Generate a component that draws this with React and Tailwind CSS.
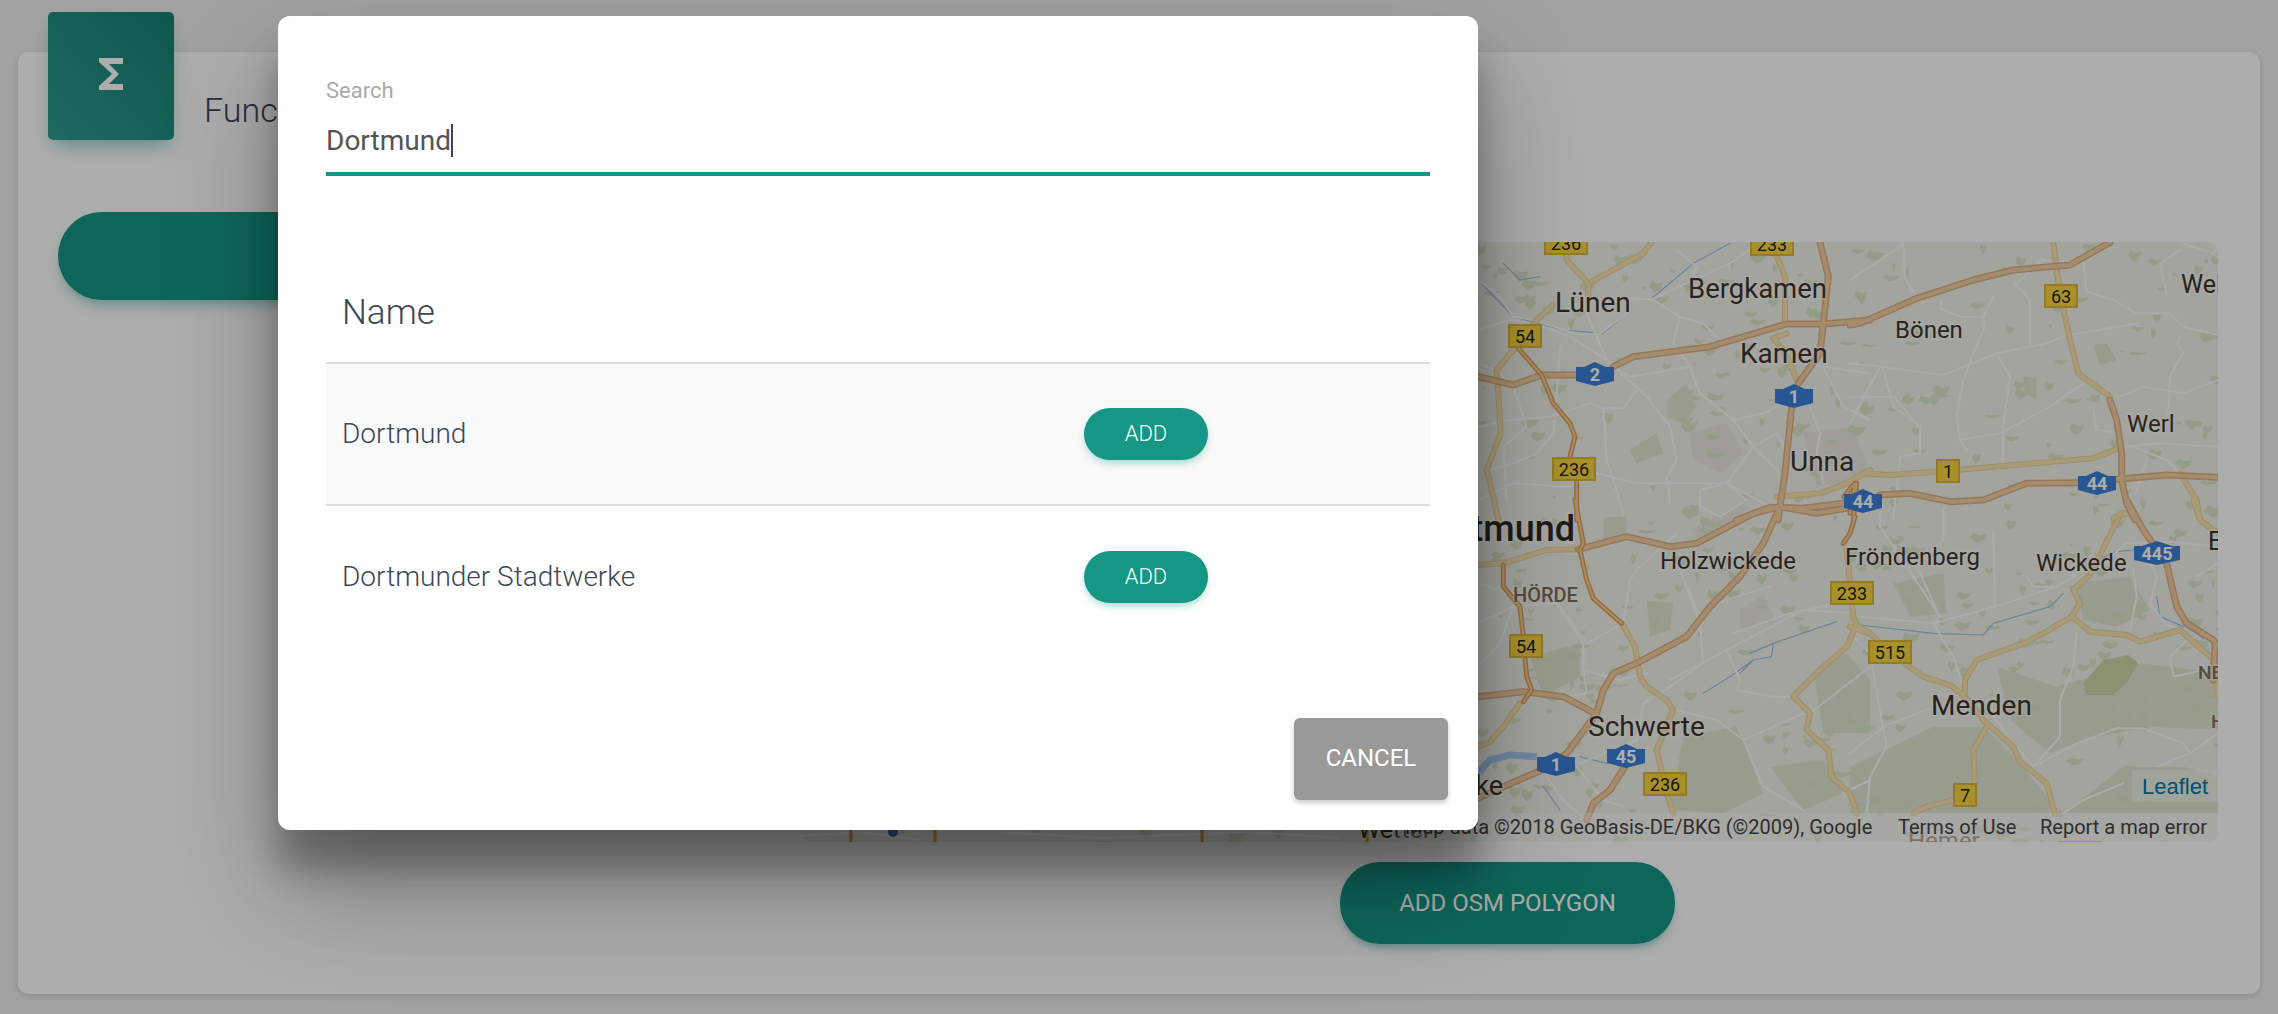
const ROADS = [
  // north west part of the map
  { ox: 1470, oy: 220, white: [
    "24,180 90,230 130,290 190,300 330,345 390,340 470,280 480,235 550,240 630,290 700,310 750,360",
    "24,330 120,300 190,310 300,350 410,420 530,530 600,620 620,720 590,770 600,850",
    "350,280 410,420 430,440 480,470 660,440 690,520 790,600 850,680 930,760",
    "24,430 80,450 130,500 170,620 100,680 110,840",
    "270,380 260,530 250,640 200,700 130,730 24,760",
    "24,620 120,600 240,590 360,550 400,565 460,565 500,510",
    "400,565 410,720 430,780 460,880",
    "380,760 500,790 640,790 770,790 900,860",
    "630,290 610,370 660,440 680,500",
    "770,790 850,680 920,640 950,690",
    "790,600 880,580 960,540",
    "1020,560 1050,640 1040,700 1060,790",
    "1060,440 1200,460", "1000,430 1060,440 1120,560 1200,600",
    "540,240 780,130 880,60", "620,90 680,140 660,190",
    "24,840 130,790 300,800 380,760",
    "690,810 770,790 830,840 750,890 690,860 690,810",
  ], yellow: [
    "355,190 290,120 285,70", "355,190 520,100 545,67", "355,190 355,225",
    "250,255 200,300 165,347 80,450 85,520 92,640 50,750 70,830 85,900",
    "905,72 945,170 945,300", "950,340 910,355 935,385 960,430 985,490",
    "920,830 1050,820 1130,790 1200,750",
  ], orange: [
    "24,470 130,495 215,465 320,465", "430,440 490,410 720,380 950,312 1060,312 1200,300",
    "1050,67 1075,170 1060,310 1050,400 985,490", "965,560 945,760 930,860 925,900",
    "800,900 900,862 1000,865 1120,850",
  ], thin: [
    "145,385 215,465 250,550 300,610 315,650 300,710", "320,780 320,900",
    "1122,830 1145,800 1160,790 1150,900",
  ], water: [
    "24,180 130,290 280,330 400,340 470,280", "540,240 670,130 780,70",
    "100,130 150,180 210,170",
  ] },
  // north east part of the map
  { ox: 1850, oy: 220, white: [
    "0,180 100,115 160,70 165,175 200,230 220,250", "275,240 270,265 330,290 400,290 405,320 370,400 340,480 320,590 330,660 350,690",
    "0,430 90,440 280,465 440,400 590,370 650,345", "660,345 865,310", "430,230 400,290",
    "90,440 0,610", "495,190 540,240 540,370", "700,130 710,215 790,240 860,280 960,280 1000,320 1104,345",
    "990,350 980,370 1000,395 960,470 955,580", "810,530 880,500 1000,520 1104,480",
    "830,680 930,670 1104,680", "850,680 950,720 1000,770", "890,720 860,810",
    "100,450 130,560 210,620 210,700 150,710 130,900", "0,530 130,530 200,610", "330,660 450,640 600,560 700,490",
    "1000,70 1090,100 1104,80", "700,130 580,120 500,190", "440,400 480,470 460,620 460,730",
    "730,570 740,630 810,640", "990,90 930,130 950,220",
  ], yellow: [
    "610,67 620,150 632,227 660,360 685,460 780,530",
    "0,790 40,760 120,765 293,752 730,715 805,685",
    "990,760 1040,840 1050,900", "790,895 815,880 855,880",
  ], orange: [
    "0,315 30,310 200,235 370,180 490,150 660,135 780,67",
    "780,540 800,600 815,700 815,780 830,850 855,900",
    "90,825 180,820 300,845 400,840 530,790 690,788", "800,778 950,765 1104,772",
  ], thin: ["0,880 15,790"], water: [] },
  // south west part of the map
  { ox: 1470, oy: 500, white: [
    "24,370 130,320 260,310 340,430 340,510 450,540 530,520",
    "270,320 350,430 460,370 480,240 500,210 620,100",
    "24,500 90,430 130,320", "340,510 350,580 290,590",
    "630,210 690,370 700,490 600,560 520,610 500,720 330,790",
    "600,540 770,450 810,540 800,570 910,590 970,590",
    "620,630 740,660 820,720 880,860 1000,930",
    "770,450 1000,330 1150,340", "790,400 960,340 1100,310",
    "320,800 400,900 460,920", "230,830 280,900 330,945",
    "900,260 800,290 720,320", "640,240 700,370", "1020,640 1200,500",
    "1120,880 1200,840", "820,720 1000,640",
    "30,250 110,280 150,310",
  ], yellow: [
    "24,195 100,190 230,150 325,148",
    "455,370 495,440 510,530 530,560 590,600 610,630 560,750 590,880 610,940",
    "150,610 100,680 60,725 24,740",
    "1130,150 1150,350 1160,375 1130,440 1050,510 970,590 1020,640 1010,690 1075,750 1085,830 1140,880 1160,940",
    "1160,375 1200,400",
  ], orange: [
    "325,148 470,110 600,140 680,130 850,40 930,20 1040,40 1130,25",
    "930,20 880,130 810,230 720,320 650,410 500,490 430,520 400,570 380,640 290,760 215,810 100,860 24,895",
    "24,590 160,575 280,590 375,640", "465,800 420,870 370,910 350,960",
  ], thin: [
    "315,0 340,130 330,150 350,240 370,295 455,370",
    "100,195 100,260 150,320 160,410 170,530 185,570 160,605",
    "1155,50 1140,100 1120,130",
  ], water: [
    "840,460 910,430 1100,365", "700,580 780,530 850,480", "910,430 905,470 850,480 810,520",
    "330,770 410,790", "220,860 270,930",
  ] },
  // south east part of the map
  { ox: 1850, oy: 500, white: [
    "0,760 100,680 240,625", "550,800 680,730 800,685 880,685 1000,730 1020,760 1104,700",
    "550,800 490,730 430,650", "820,850 700,900 640,940", "720,225 830,130 960,125 1104,140",
    "90,40 90,80 270,350 250,370 310,470 345,570", "430,100 435,320 250,370 30,350",
    "280,20 280,120 200,200 270,350", "435,320 620,260 680,225 660,225",
    "900,190 920,230 900,310 950,375 1000,390", "850,210 860,290 840,390",
    "680,400 670,500 630,600 630,710 550,800", "1010,420 960,470 970,530 1060,510",
    "100,680 110,740 60,830 50,940", "0,400 60,460 100,690", "920,800 1020,760",
    "530,230 550,260 620,260", "1040,230 1104,190",
  ], yellow: [
    "0,380 60,400 120,460 220,530 300,555 345,590", "345,590 345,540 380,480 520,430 580,400 665,350 690,310 670,270 720,225 810,45 835,40",
    "665,350 720,395 830,405 870,425 990,390 1080,470",
    "345,590 400,660 490,740 510,785 590,850 615,940", "410,680 370,750 375,850",
    "310,900 230,920 190,940", "1030,0 1050,60 1104,100", "1090,480 1104,590",
  ], orange: [
    "830,0 880,90 950,190 980,320 1010,370 1090,420 1104,440",
    "1095,430 1090,540",
  ], thin: [], water: [
    "30,375 250,400 400,405 430,370 600,320 640,280", "850,150 800,155 740,180",
    "920,290 930,350 1000,380", "1010,380 1060,415",
  ] },
]

const FORESTS = [
  { ox: 1850, oy: 500, pts: "440,500 620,560 870,490 1104,520 1104,690 900,680 700,720 600,760 480,660" },
  { ox: 1850, oy: 500, pts: "0,800 250,680 400,680 500,780 600,900 600,940 0,940" },
  { ox: 1850, oy: 500, pts: "640,940 820,800 1000,800 1104,830 1104,940" },
  { ox: 1850, oy: 500, pts: "680,250 840,230 900,330 800,380 700,360" },
  { ox: 1850, oy: 500, pts: "130,250 280,220 290,340 180,350" },
  { ox: 1850, oy: 220, pts: "520,470 560,475 560,540 525,520" },
  { ox: 1850, oy: 220, pts: "730,375 770,370 800,420 750,435" },
  { ox: 1470, oy: 220, pts: "590,540 650,490 680,560 640,610 590,590" },
  { ox: 1470, oy: 220, pts: "480,690 560,640 580,700 500,730" },
  { ox: 1470, oy: 500, pts: "530,300 610,310 600,390 540,410" },
  { ox: 1470, oy: 500, pts: "640,710 800,680 880,880 760,940 600,930" },
  { ox: 1470, oy: 500, pts: "900,800 1060,780 1120,880 1000,930" },
  { ox: 1470, oy: 500, pts: "1030,510 1130,460 1200,540 1200,700 1060,700" },
  { ox: 1470, oy: 500, pts: "180,470 330,430 330,530 220,590" },
  { ox: 1470, oy: 500, pts: "400,50 470,50 470,100 400,120" },
]

const CITY = [
  { ox: 1470, oy: 500, pts: "810,330 880,285 920,370 810,385" },
  { ox: 1470, oy: 220, pts: "660,640 770,610 820,700 750,760 670,720" },
  { ox: 1470, oy: 220, pts: "1000,640 1150,620 1200,770 1040,800" },
  { ox: 1470, oy: 500, pts: "660,90 830,0 820,40 700,130" },
]

const SHIELDS = [
  ["2", 1595, 374], ["1", 1794, 396], ["44", 1863, 501], ["44", 2097, 483],
  ["445", 2157, 553], ["1", 1556, 764], ["45", 1626, 756],
]

const SIGNS = [
  ["236", 1566, 243], ["233", 1772, 244], ["54", 1525, 336], ["236", 1574, 469],
  ["63", 2061, 296], ["1", 1948, 471], ["54", 1526, 646], ["233", 1852, 593],
  ["236", 1665, 784], ["515", 1890, 652], ["7", 1965, 795], ["515", 2080, 853],
]

// text, x, baseline, size, weight, colour, anchor
const PLACES = [
  ["Lünen", 1555, 312, 28], ["Bergkamen", 1688, 298, 27.5], ["Kamen", 1740, 363, 28],
  ["Unna", 1790, 471, 28], ["Bönen", 1895, 338, 24], ["Wel", 2181, 293, 25],
  ["Werl", 2127, 432, 24], ["Dortmund", 1575, 541, 36, 500, "#2c2820", "end"],
  ["Holzwickede", 1660, 569, 24], ["HÖRDE", 1513, 602, 20, 500, "#7c6e5c"],
  ["Schwerte", 1588, 736, 28], ["Herdecke", 1503, 795, 27, 400, "#3c362c", "end"],
  ["Fröndenberg", 1845, 565, 24], ["Wickede", 2036, 571, 24], ["Menden", 1931, 715, 28],
  ["Ense", 2208, 550, 25], ["NEHEIM", 2198, 679, 19, 500, "#7c6e5c"], ["Hüsten", 2211, 728, 19, 500, "#7c6e5c"],
  ["Hemer", 1908, 849, 24, 400, "#7c6e5c"], ["Wetter", 1358, 838, 25],
]

const rnd = (() => {
  let s = 41
  return () => {
    s = (s * 16807) % 2147483647
    return s / 2147483647
  }
})()

// little scraps of woodland, the texture of the map
const SCRAPS = Array.from({ length: 800 }, () => {
  const x = 800 + rnd() * 1418
  const y = 242 + rnd() * 600
  const w = 3 + rnd() * 13
  const h = 3 + rnd() * 10
  return `${x},${y} ${x + w * 0.5},${y + h * 0.25} ${x + w},${y + h * 0.1} ${x + w * 0.8},${y + h * 0.7} ${x + w * 0.3},${y + h} ${x - w * 0.2},${y + h * 0.5}`
})

const toPage = (ox, oy, str) =>
  str
    .split(" ")
    .map((p) => {
      const [x, y] = p.split(",").map(Number)
      return `${ox + x / 3},${oy + y / 3}`
    })
    .join(" ")

const Lines = ({ kind, color, width }) =>
  ROADS.flatMap((layer, i) =>
    layer[kind].map((str, j) => (
      <polyline
        key={`${kind}-${color}-${i}-${j}`}
        points={toPage(layer.ox, layer.oy, str)}
        fill="none"
        stroke={color}
        strokeWidth={width}
        strokeLinejoin="round"
        strokeLinecap="round"
      />
    ))
  )

const MapDrawing = () => (
  <svg viewBox="800 242 1418 600" className="block w-full h-full">
    <rect x="800" y="242" width="1418" height="600" fill="#f2f2ea" />
    {FORESTS.map((f, i) => (
      <polygon key={i} points={toPage(f.ox, f.oy, f.pts)} fill="#dfe6d2" />
    ))}
    <polygon points={toPage(1850, 500, "700,550 760,480 835,465 865,490 830,550 790,585 710,585")} fill="#cbd9a8" />
    {CITY.map((f, i) => (
      <polygon key={i} points={toPage(f.ox, f.oy, f.pts)} fill="#e9e7e0" />
    ))}
    {SCRAPS.map((p, i) => (
      <polygon key={i} points={p} fill="#dbe5cb" />
    ))}
    <Lines kind="water" color="#9cc0ec" width={1.2} />
    <polyline points={toPage(1470, 500, "24,820 60,780 120,765 200,770")} fill="none" stroke="#a8c8f0" strokeWidth="7" />
    <polyline points="800,836 860,832 920,840" fill="none" stroke="#fff" strokeWidth="2" />
    <polyline points="1000,832 1100,838 1250,832 1340,838" fill="none" stroke="#fff" strokeWidth="2" />
    <Lines kind="white" color="#fcfcfa" width={2} />
    <Lines kind="yellow" color="#e8d09a" width={6} />
    <Lines kind="yellow" color="#f8e4b0" width={4} />
    <Lines kind="orange" color="#e0b082" width={7} />
    <Lines kind="orange" color="#f2cfa2" width={4} />
    <Lines kind="thin" color="#e0a058" width={5} />
    <Lines kind="thin" color="#f6d09e" width={2} />
    {[851, 935, 1202, 1367].map((x) => (
      <line key={x} x1={x} y1="825" x2={x} y2="842" stroke="#e0a058" strokeWidth="3" />
    ))}
    <circle cx="893" cy="832" r="5" fill="#3c6fd0" />
    {SIGNS.map(([t, x, y]) => {
      const w = t.length === 3 ? 44 : t.length === 2 ? 34 : 24
      return (
        <g key={`${t}${x}`}>
          <rect x={x - w / 2 + 1} y={y - 11} width={w - 2} height="22" fill="#f8d640" stroke="#dcb63a" strokeWidth="2" />
          <text x={x} y={y + 6.5} textAnchor="middle" fontSize="18" fill="#26241c">{t}</text>
        </g>
      )
    })}
    {SHIELDS.map(([t, x, y]) => {
      const w = t.length === 3 ? 23 : 19
      return (
        <g key={`${t}${x}`}>
          <polygon
            points={`${x - w},${y - 7} ${x - w + 8},${y - 7} ${x},${y - 12} ${x + w - 8},${y - 7} ${x + w},${y - 7} ${x + w},${y + 7} ${x},${y + 12} ${x - w},${y + 7}`}
            fill="#3c7fd8"
          />
          <text x={x} y={y + 6.5} textAnchor="middle" fontSize="18" fontWeight="700" fill="#ffffff">{t}</text>
        </g>
      )
    })}
    {PLACES.map(([t, x, y, size, weight = 400, color = "#3c362c", anchor = "start"]) => (
      <text
        key={t}
        x={x}
        y={y}
        fontSize={size}
        fontWeight={weight}
        fill={color}
        textAnchor={anchor}
        stroke="#ffffff"
        strokeOpacity="0.45"
        strokeWidth="3"
        paintOrder="stroke"
      >
        {t}
      </text>
    ))}
  </svg>
)

const GoogleMap = () => (
  <div className="relative w-[1418px] h-[600px] rounded-[10px] overflow-hidden">
    <MapDrawing />
    <div className="absolute right-0 bottom-[40px] w-[86px] h-[32px] bg-white/40 flex items-center justify-center text-[22px] font-['Liberation_Sans',sans-serif] text-[#0078a8]">
      Leaflet
    </div>
    <div className="absolute left-[597px] right-0 bottom-0 h-[29px] pb-[2px] bg-white/40 flex items-center text-[20px] text-[#444]">
      <span className="ml-[8px] w-[493px] whitespace-nowrap">Map data ©2018 GeoBasis-DE/BKG (©2009), Google</span>
      <span className="w-[142px] whitespace-nowrap">Terms of Use</span>
      <span className="whitespace-nowrap">Report a map error</span>
    </div>
  </div>
)

const ResultRow = ({ name, striped, divided }) => (
  <div className={`flex items-center h-[142px] px-4 text-[28px] font-light text-[#3c4858] ${striped ? "bg-[#f9f9f9]" : ""} ${divided ? "border-b-2 border-[#ddd]" : ""}`}>
    <span className="w-[742px]">{name}</span>
    <button className="w-[124px] h-[52px] pb-[2px] rounded-[26px] bg-[#169785] text-white text-[22px] shadow-[0_4px_8px_-2px_rgba(22,151,133,0.45)]">
      ADD
    </button>
  </div>
)

const SearchModal = () => (
  <div className="absolute left-[278px] top-[16px] w-[1200px] h-[814px] rounded-[12px] bg-white flex flex-col shadow-[0_39px_35px_0_rgba(0,0,0,0.28),0_58px_112px_0_rgba(0,0,0,0.3)]">
    <div className="px-[48px] pt-[61px]">
      <div className="text-[22px] leading-[28px] text-[#aaa]">Search</div>
      <div className="h-[71px] pt-[14px] border-b-[4px] border-[#169785] text-[28px] leading-[44px] text-[#555]">
        <span className="border-r-2 border-[#444]">Dortmund</span>
      </div>
      <div className="mt-[86px] h-[102px] pt-[2px] flex items-center px-4 border-b-2 border-[#ddd] text-[35px] font-light text-[#3c4858]">
        Name
      </div>
      <ResultRow name="Dortmund" striped divided />
      <ResultRow name="Dortmunder Stadtwerke" />
    </div>
    <div className="mt-auto flex justify-end px-[30px] pb-[30px]">
      <button className="w-[154px] h-[82px] pb-[2px] rounded-[6px] bg-[#999] text-white text-[24px] shadow-[0_3px_5px_rgba(0,0,0,0.2)]">
        CANCEL
      </button>
    </div>
  </div>
)

export default function App() {
  return (
    <div className="relative h-[1014px] overflow-hidden bg-[#eeeeee] font-['Roboto',sans-serif]">
      <div className="pt-[52px] px-[18px]">
        <div className="h-[942px] rounded-[10px] bg-white shadow-[0_2px_6px_rgba(0,0,0,0.14)]">
          <div className="flex items-start pl-[30px]">
            <div className="-mt-[40px] w-[126px] h-[128px] pb-[4px] rounded-[5px] bg-gradient-to-tr from-[#2a9d8f] to-[#168072] flex items-center justify-center shadow-[0_10px_18px_-6px_rgba(22,151,133,0.55)]">
              <svg viewBox="0 0 24 24" className="w-[48px] h-[48px]" fill="#ffffff">
                <path d="M18 4H6v2l6.5 6L6 18v2h12v-3h-7l5-5-5-5h7z" />
              </svg>
            </div>
            <h1 className="ml-[30px] mt-[34px] text-[34px] font-light leading-[48px] text-[#3c4858] whitespace-nowrap">
              Functional Units
            </h1>
          </div>
          <div className="flex items-start pl-[40px] pt-[72px]">
            <button className="w-[640px] h-[88px] rounded-[44px] bg-[#169785] shadow-[0_8px_14px_-4px_rgba(22,151,133,0.5)]" />
            <div className="ml-[102px] pt-[30px] flex flex-col items-center">
              <GoogleMap />
              <button className="mt-[20px] mr-[3px] w-[335px] h-[82px] rounded-[40px] bg-[#169785] text-white text-[24px] shadow-[0_6px_10px_-3px_rgba(22,151,133,0.5)]">
                ADD OSM POLYGON
              </button>
            </div>
          </div>
        </div>
      </div>
      <div className="absolute inset-0 bg-black/[0.32]" />
      <SearchModal />
    </div>
  )
}
